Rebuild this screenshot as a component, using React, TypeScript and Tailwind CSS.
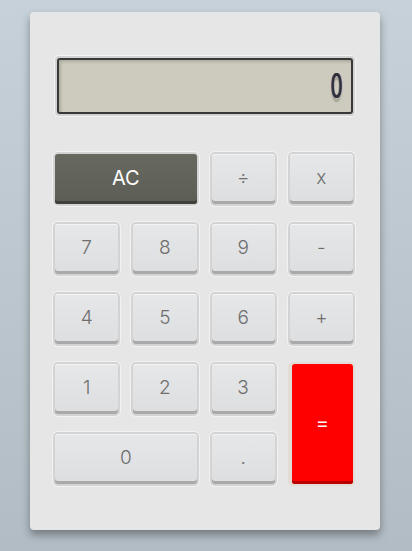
import React from 'react';

type Key = { label: string; kind?: 'num' | 'clear' | 'equals'; span?: string };

const keys: Key[] = [
  { label: 'AC', kind: 'clear', span: 'col-span-2' },
  { label: '÷' },
  { label: 'x' },
  { label: '7' },
  { label: '8' },
  { label: '9' },
  { label: '-' },
  { label: '4' },
  { label: '5' },
  { label: '6' },
  { label: '+' },
  { label: '1' },
  { label: '2' },
  { label: '3' },
  { label: '=', kind: 'equals', span: 'row-span-2' },
  { label: '0', span: 'col-span-2' },
  { label: '.' },
];

function CalcKey({ k }: { k: Key }) {
  const inner =
    k.kind === 'clear'
      ? 'bg-gradient-to-b from-[#676960] to-[#5c5e56] text-white text-[20px] font-normal shadow-[inset_0_-3px_0_#3e403a]'
      : k.kind === 'equals'
        ? 'bg-[#ff0000] text-white text-[20px] shadow-[inset_0_-3px_0_#b80000]'
        : 'bg-gradient-to-b from-[#e5e7e8] to-[#dcdedf] text-[#6e6e6e] text-[19px] font-light shadow-[inset_0_-3px_0_#a9a9a9,inset_0_1px_0_#f4f4f4]';
  const ring =
    k.kind === 'equals'
      ? 'p-[2px] pl-[4px] rounded-[5px] bg-[#e3dcd4]'
      : 'p-[2px] rounded-[5px] bg-[#d3d3d3] shadow-[0_0_0_1px_#f2f2f2]';
  return (
    <div className={`${k.span ?? ''} ${ring} flex`}>
      <button className={`${inner} flex-1 rounded-[3px] flex items-center justify-center pb-[2px]`}>
        {k.label}
      </button>
    </div>
  );
}

export default function App() {
  return (
    <div
      className="h-[551px] w-full bg-gradient-to-b from-[#c6d1d9] to-[#b2bcc4] pt-[12px]"
      style={{ fontFamily: 'Inter, "Open Sans", sans-serif' }}
    >
      <div className="ml-[30px] w-[350px] h-[518px] rounded-[4px] bg-[#e6e6e6] shadow-[0_5px_8px_rgba(0,0,0,0.35)] pt-[44px] pl-[23px] pr-[25px]">
        {/* display */}
        <div className="ml-[2px] p-[2px] rounded-[4px] bg-[#d2d2d2] shadow-[0_0_0_1px_#f4f4f4]">
          <div className="h-[56px] rounded-[3px] border-2 border-[#383838] bg-[#cccbbd] shadow-[inset_2px_2px_3px_rgba(0,0,0,0.15)] flex items-center justify-end pr-[9px]">
            <span
              className="inline-block text-[34px] font-normal leading-none text-[#2a3238] scale-x-[0.55] origin-right [text-shadow:1px_0_0_#b0402a,-1px_0_0_#3060b0,0_4px_2px_rgba(0,0,0,0.2)]"
              style={{ fontFamily: 'Inter, sans-serif' }}
            >
              0
            </span>
          </div>
        </div>
        {/* keys */}
        <div className="mt-[36px] grid grid-cols-4 auto-rows-[54px] gap-x-[11px] gap-y-[16px]">
          {keys.map((k) => (
            <CalcKey key={k.label} k={k} />
          ))}
        </div>
      </div>
    </div>
  );
}
